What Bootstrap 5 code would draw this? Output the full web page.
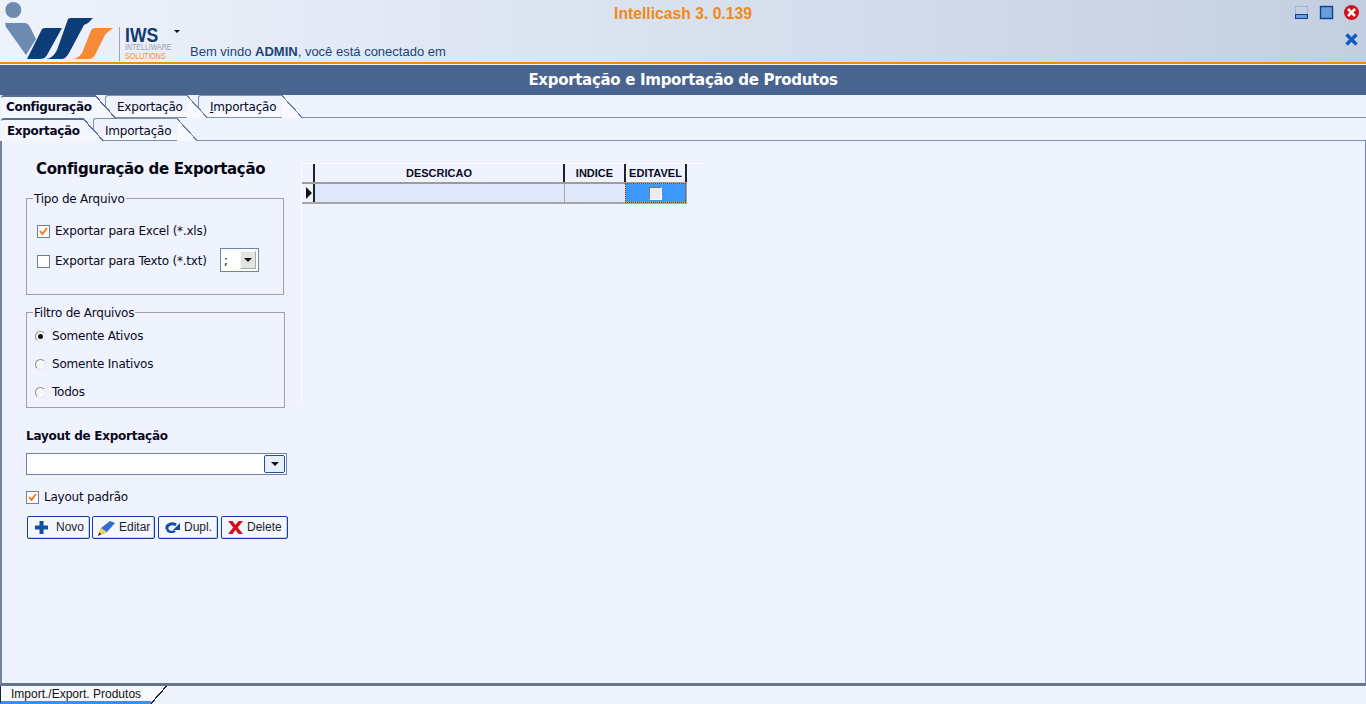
<!DOCTYPE html>
<html lang="pt-BR">
<head>
    <meta charset="UTF-8">
    <title>Intellicash</title>
    <link href="https://cdn.jsdelivr.net/npm/bootstrap@5.3.0/dist/css/bootstrap.min.css" rel="stylesheet">
    <style>
        html, body { height: 704px; overflow: hidden; }
        body { background: #eff3fd; font-family: "DejaVu Sans", sans-serif; font-size: 12px; letter-spacing: -.22px; color: #0a0a1e; line-height: 14px; }
        .app-shell { height: 704px; }

        /* top header */
        .app-head { height: 62px; background: linear-gradient(90deg, #eef2fb 0%, #dfe6f3 35%, #c3cfe0 100%); }
        .logo-box { width: 190px; height: 62px; flex: none; }
        .logo-text { width: 50px; flex: none; height: 34px; margin-top: 27px; border-left: 1px solid #9aa5b5; padding-left: 5px; letter-spacing: 0; }
        .logo-iws { font: bold 20px/16px "Liberation Sans", sans-serif; color: #123a6e; transform: scaleX(.88); transform-origin: left; }
        .logo-sub { font: 9px/9px "Liberation Sans", sans-serif; color: #98a2ae; white-space: nowrap; transform: scaleX(.78); transform-origin: left; }
        .logo-sub.org { color: #f28c38; }
        .caret-mark { width: 0; height: 0; border: 3px solid transparent; border-top: 3px solid #111; margin: 30px 0 0 5px; flex: none; }
        .welcome { color: #1b4474; position: absolute; left: 190px; top: 45px; font: 13px/14px "Liberation Sans", sans-serif; letter-spacing: 0; white-space: nowrap; }
        .app-name { position: absolute; left: 0; right: 0; top: 5px; text-align: center; color: #ef8a17; font: bold 15.7px/18px "Liberation Sans", sans-serif; letter-spacing: 0; }
        .win-icons { position: absolute; right: 0; top: 0; width: 72px; }
        .orange-line { height: 2px; background: #ee8a12; }
        .gap-line { height: 1px; background: #eef2fb; }
        .title-bar { height: 30px; background: #4a6490; color: #fff; font: bold 15px/30px "DejaVu Sans", sans-serif; letter-spacing: -.3px; text-align: center; }

        /* slanted tabs */
        .tab-row { position: relative; flex: none; height: 23px; }
        .tab-fill { flex: 1; border-bottom: 1px solid #7f90ad; }
        .tab-item { position: relative; height: 100%; border-top: 1px solid #7f90ad; border-left: 1px solid #7f90ad; border-bottom: 1px solid #7f90ad; border-top-left-radius: 3px; background: linear-gradient(#eff3fd 50%, #f9fbff); padding: 4px 0 0 11px; margin-right: 21px; white-space: nowrap; flex: none; }
        .tab-item::after { content: ""; position: absolute; top: -1px; bottom: -1px; left: 100%; width: 21px; background: linear-gradient(to top right, #f7f9fe calc(50% - 1px), #6f81a0 calc(50% - 1px), #6f81a0 calc(50% + .2px), transparent calc(50% + .2px)); }
        .tab-item.on { border: 0; border-top: 2px solid #566f97; background: #f4f7fe; font-weight: bold; letter-spacing: -.33px; padding: 3px 0 0 5px; margin-left: 1px; }
        .tab-item.on::after { top: -2px; bottom: 0; background: linear-gradient(to top right, #f4f7fe calc(50% - 1px), #566f97 calc(50% - 1px), #566f97 calc(50% + .3px), transparent calc(50% + .3px)); }
        .tab-z3 { z-index: 3; }
        .tab-z2 { z-index: 2; }
        .tab-z1 { z-index: 1; }
        .tab-w94 { width: 94px; }
        .tab-w82 { width: 82px; }
        .tab-w84 { width: 84px; }
        .tab-back { margin-left: -11px; }
        .tab-back2 { margin-left: -10px; }
        .sub-row .tab-item { padding-top: 5px; }
        .sub-row .tab-item.on { padding: 4px 0 0 6px; }

        /* main panel */
        .main-panel { flex: 1; border-left: 2px solid #7283a6; border-right: 1px solid #7283a6; border-bottom: 3px solid #64748f; min-height: 0; }
        .left-col { width: 262px; margin-left: 24px; flex: none; }
        .cfg-title { font: bold 15px/20px "DejaVu Sans", sans-serif; letter-spacing: -.35px; margin: 18px 0 19px 10px; white-space: nowrap; color: #050514; }
        .grp { border: 1px solid #a0a0a0; position: relative; width: 258px; }
        .grp-legend { position: absolute; top: -7px; left: 6px; background: #eff3fd; padding: 0 1px; line-height: 14px; }
        .grp-a { height: 97px; padding: 25px 0 0 10px; margin-bottom: 17px; }
        .grp-b { height: 96px; width: 259px; padding: 16px 0 0 8px; }
        .opt-line { height: 14px; margin-bottom: 16px; white-space: nowrap; }
        .grp-b .opt-line { margin-bottom: 14px; }
        .chk-box { width: 13px; height: 13px; border: 1px solid #6b7fa3; background: #fff; flex: none; display: inline-flex; margin-right: 5px; }
        .rad-dot { width: 11px; height: 11px; border-radius: 50%; border: 1px solid #8d8d8d; border-right-color: #e8e8e8; border-bottom-color: #e8e8e8; background: #f7f7f7; flex: none; margin-right: 6px; display: inline-flex; align-items: center; justify-content: center; }
        .rad-dot.sel::before { content: ""; width: 5px; height: 5px; border-radius: 50%; background: #111; }
        .sep-pick { width: 39px; height: 24px; flex: none; border: 1px solid #7283a6; background: #fff; margin: -2px 0 0 13px; padding: 2px 2px 2px 3px; font-size: 13px; line-height: 19px; }
        .sep-arrow { width: 16px; background: #e4e4e4; border: 1px solid #f4f4f4; border-right-color: #aaa; border-bottom-color: #aaa; }
        .tri-down { width: 0; height: 0; border: 4px solid transparent; border-top: 4px solid #111; border-bottom: 0; }
        .lay-label { font-weight: bold; letter-spacing: -.25px; margin: 21px 0 10px 0; line-height: 14px; }
        .lay-combo { width: 261px; height: 22px; border: 1px solid #7283a6; background: #fff; padding: 1px; }
        .combo-arrow { width: 21px; background: #e8eefb; border: 1px solid #1f4fa0; border-radius: 2px; }
        .lay-check { margin: 15px 0 12px 0; }
        .act-row { gap: 3px; margin-left: 1px; }
        .act-btn { height: 23px; flex: none; border: 1px solid #153f9c; border-radius: 2px; background: #f4f7fe; box-shadow: inset -1px -1px 0 #c5d0ea; padding: 0 0 0 6px; font: 12px/21px "Liberation Sans", sans-serif; letter-spacing: 0; color: #223; white-space: nowrap; }
        .act-btn svg { flex: none; }
        .act-btn:hover { background: #fff; }
        .btn-novo { width: 63px; margin-right: -1px; padding-left: 7px; }
        .btn-editar { width: 63px; padding-left: 5px; }
        .btn-dupl { width: 60px; padding-left: 6px; }
        .btn-delete { width: 67px; padding-left: 6px; }

        /* data grid */
        .grid-wrap { margin: 22px 0 0 13px; width: 402px; height: 240px; border-left: 1px solid #fff; border-top: 1px solid #fff; }
        .data-grid { border-collapse: collapse; table-layout: fixed; width: 384px; }
        .data-grid th { height: 19px; font: bold 11px/17px "Liberation Sans", sans-serif; letter-spacing: 0; text-align: center; padding: 0; border-right: 2px solid #222; border-bottom: 2px solid #9c9c9c; }
        .data-grid td { height: 20px; padding: 0; background: #dfe7fa; border-right: 1px solid #a6a6a6; border-bottom: 2px solid #a6a6a6; border-top: 1px solid #222; }
        .data-grid td.row-mark { background: #eff3fd; border-right: 2px solid #222; vertical-align: middle; }
        .data-grid td.focus-cell { background: #3d98ff; outline: 1px dotted #7a4a10; outline-offset: -1px; text-align: center; vertical-align: middle; }
        .cell-chk { display: inline-block; width: 13px; height: 13px; background: #ececec; border: 1px solid #777; border-right-color: #fff; border-bottom-color: #fff; vertical-align: middle; }
        .col-mark { width: 12px; }
        .col-desc { width: 250px; }
        .col-num { width: 61px; }

        /* bottom doc tab */
        .doc-tabs { height: 18px; flex: none; position: relative; }
        .doc-tab { position: relative; width: 151px; height: 18px; padding: 1px 0 0 10px; background: #f7f9fe; border-left: 1px solid #223; border-bottom: 3px solid #3d8fe6; font: 12px/14px "Liberation Sans", sans-serif; letter-spacing: 0; color: #111; white-space: nowrap; }
        .doc-tab::after { content: ""; position: absolute; left: 100%; top: 0; bottom: -3px; width: 16px; background: linear-gradient(to bottom right, #f7f9fe calc(50% - 1px), #223 calc(50% - 1px), #223 calc(50% + .3px), transparent calc(50% + .3px)); }
    </style>
</head>
<body>
    <div class="app-shell d-flex flex-column">
        <!-- Header -->
        <div class="app-head position-relative d-flex">
            <div class="logo-box d-flex">
                <svg width="119" height="62" viewBox="0 0 119 62" class="flex-shrink-0">
                    <circle cx="13.3" cy="10" r="8" fill="#6d8bb0"/>
                    <path d="M5 23H24C27 23 29 25 30 27L36 39L26 55L6 27Z" fill="#6d8bb0"/>
                    <path d="M27 59L42 29C43 28 44 28 46 28H62L47 55C45 58 43 59 40 59Z" fill="#0d3d78"/>
                    <path d="M45 59C50 59 54 56 57 50L68 19C69 18 70 18 72 18H93L88 23L84 25L69 53C66 58 64 59 61 59Z" fill="#0d3d78"/>
                    <path d="M70 59C76 59 79 57 82 53L90 33C91 29 93 28 96 28H113L108 32C106 33 105 35 104 37L95 55C93 58 91 59 88 59Z" fill="#f68b35"/>
                </svg>
                <div class="logo-text">
                    <div class="logo-iws">IWS</div>
                    <div class="logo-sub">INTELLIWARE</div>
                    <div class="logo-sub org">SOLUTIONS</div>
                </div>
                <div class="caret-mark"></div>
            </div>
            <div class="welcome">Bem vindo <b>ADMIN</b>, você está conectado em</div>
            <div class="app-name">Intellicash 3. 0.139</div>
            <div class="win-icons">
                <svg width="72" height="50" viewBox="0 0 72 50" class="d-block">
                    <rect x="1.5" y="6.5" width="12" height="8" fill="none" stroke="#6f9fd0" stroke-dasharray="1 1"/>
                    <rect x="1.5" y="14.5" width="12" height="4" fill="#6a9fd6" stroke="#0c3fa0"/>
                    <rect x="26.5" y="6.5" width="12" height="12" fill="#6a9fd6" stroke="#0c3fa0" stroke-width="1.4"/>
                    <circle cx="57.5" cy="12.5" r="7.5" fill="#d4101a"/>
                    <path d="M54 9L61 16M61 9L54 16" stroke="#fff" stroke-width="2.6"/>
                    <path d="M52.5 34.5L62.5 44.5M62.5 34.5L52.5 44.5" stroke="#0f5dc0" stroke-width="3.4"/>
                </svg>
            </div>
        </div>
        <div class="orange-line"></div>
        <div class="gap-line"></div>
        <div class="title-bar">Exportação e Importação de Produtos</div>

        <!-- Main tabs -->
        <div class="tab-row d-flex">
            <div class="tab-item on tab-w94 tab-z3">Configuração</div>
            <div class="tab-item tab-w82 tab-back tab-z2">Exportação</div>
            <div class="tab-item tab-w84 tab-back2 tab-z1"><u>I</u>mportação</div>
            <div class="tab-fill"></div>
        </div>
        <div class="tab-row sub-row d-flex">
            <div class="tab-item on tab-w82 tab-z3">Exportação</div>
            <div class="tab-item tab-w84 tab-back tab-z2">Importação</div>
            <div class="tab-fill"></div>
        </div>

        <!-- Panel -->
        <div class="main-panel d-flex">
            <div class="left-col">
                <div class="cfg-title">Configuração de Exportação</div>
                <div class="grp grp-a">
                    <div class="grp-legend">Tipo de Arquivo</div>
                    <div class="opt-line d-flex align-items-center">
                        <span class="chk-box"><svg width="11" height="11" viewBox="0 0 11 11"><path d="M2 5L4.5 8L9 2" fill="none" stroke="#f0801a" stroke-width="2"/></svg></span>Exportar para Excel (*.xls)
                    </div>
                    <div class="opt-line d-flex align-items-center">
                        <span class="chk-box"></span>Exportar para Texto (*.txt)
                        <div class="sep-pick d-flex justify-content-between">
                            <span>;</span>
                            <span class="sep-arrow d-flex align-items-center justify-content-center"><span class="tri-down"></span></span>
                        </div>
                    </div>
                </div>
                <div class="grp grp-b">
                    <div class="grp-legend">Filtro de Arquivos</div>
                    <div class="opt-line d-flex align-items-center"><span class="rad-dot sel"></span>Somente Ativos</div>
                    <div class="opt-line d-flex align-items-center"><span class="rad-dot"></span>Somente Inativos</div>
                    <div class="opt-line d-flex align-items-center"><span class="rad-dot"></span>Todos</div>
                </div>
                <div class="lay-label">Layout de Exportação</div>
                <div class="lay-combo d-flex justify-content-end">
                    <span class="combo-arrow d-flex align-items-center justify-content-center"><span class="tri-down"></span></span>
                </div>
                <div class="lay-check d-flex align-items-center">
                    <span class="chk-box"><svg width="11" height="11" viewBox="0 0 11 11"><path d="M2 5L4.5 8L9 2" fill="none" stroke="#f0801a" stroke-width="2"/></svg></span>Layout padrão
                </div>
                <div class="act-row d-flex">
                    <button class="act-btn btn-novo d-flex align-items-center" type="button">
                        <svg width="13" height="13" viewBox="0 0 13 13" class="me-2"><path d="M4.5 0H8.5V4.5H13V8.5H8.5V13H4.5V8.5H0V4.5H4.5Z" fill="#0f4fa8"/></svg>Novo
                    </button>
                    <button class="act-btn btn-editar d-flex align-items-center" type="button">
                        <svg width="17" height="16" viewBox="0 0 17 16" class="me-1"><path d="M0 16L3 8L12 1L17 3L9 12Z" fill="#2f6fd0"/><path d="M0 16L3 8L9 12Z" fill="#f2d25e"/><path d="M0 16L1.2 12.5L3.5 14Z" fill="#333"/></svg>Editar
                    </button>
                    <button class="act-btn btn-dupl d-flex align-items-center" type="button">
                        <svg width="15" height="11" viewBox="0 0 15 11" class="me-1"><path d="M2 7C1 3 7 0 11 3" fill="none" stroke="#0f4fa8" stroke-width="3"/><path d="M15 1V8H8Z" fill="#0f4fa8"/><path d="M2 7C3 10 7 11 10 9" fill="none" stroke="#0f4fa8" stroke-width="2.4"/></svg>Dupl.
                    </button>
                    <button class="act-btn btn-delete d-flex align-items-center" type="button">
                        <svg width="15" height="13" viewBox="0 0 15 13" class="me-1"><path d="M0 0H4.5L7.5 4L10.5 0H15L9.8 6.5L15 13H10.5L7.5 9L4.5 13H0L5.2 6.5Z" fill="#d4101a"/></svg>Delete
                    </button>
                </div>
            </div>
            <div class="grid-wrap">
                <table class="data-grid">
                    <colgroup><col class="col-mark"><col class="col-desc"><col class="col-num"><col class="col-num"></colgroup>
                    <thead>
                        <tr><th></th><th>DESCRICAO</th><th>INDICE</th><th>EDITAVEL</th></tr>
                    </thead>
                    <tbody>
                        <tr>
                            <td class="row-mark"><svg width="8" height="12" viewBox="0 0 8 12" class="d-block ms-auto"><path d="M1 0L7 6L1 12Z" fill="#111"/></svg></td>
                            <td></td>
                            <td></td>
                            <td class="focus-cell"><span class="cell-chk"></span></td>
                        </tr>
                    </tbody>
                </table>
            </div>
        </div>

        <!-- Open documents -->
        <div class="doc-tabs d-flex">
            <div class="doc-tab">Import./Export. Produtos</div>
        </div>
    </div>
    <script src="https://cdn.jsdelivr.net/npm/bootstrap@5.3.0/dist/js/bootstrap.bundle.min.js"></script>
</body>
</html>
